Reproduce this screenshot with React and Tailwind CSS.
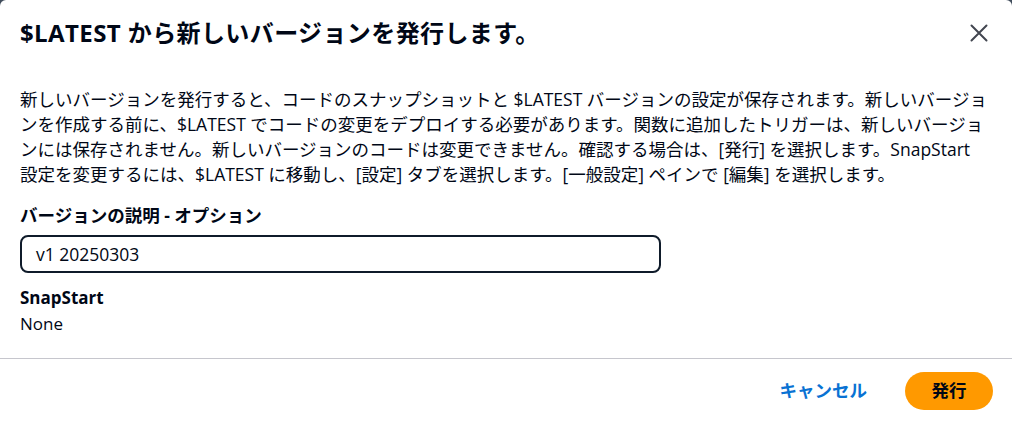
import React from 'react';

const font = { fontFamily: '"Open Sans", "Noto Sans CJK JP", sans-serif' };

const CloseIcon = () => (
  <svg width="20" height="20" viewBox="0 0 16 16" fill="none" stroke="#424650" strokeWidth="1.6" strokeLinecap="round">
    <path d="M2 2l12 12M14 2L2 14" />
  </svg>
);

export default function App() {
  return (
    <div className="w-[1012px] h-[422px] bg-[#414d5c] overflow-hidden text-[#000716]" style={font}>
      <div className="h-full bg-white rounded-t-[6px] flex flex-col">
        {/* Header */}
        <div className="flex items-start justify-between pl-5 pr-5 pt-[17px]">
          <h1 className="text-[24px] font-bold leading-[32px] tracking-[0.4px]">$LATEST から新しいバージョンを発行します。</h1>
          <button className="mt-[6px] mr-[3px]">
            <CloseIcon />
          </button>
        </div>

        {/* Body */}
        <div className="pl-5 pr-[22px] pt-[38px] flex-1">
          <p className="text-[17.5px] leading-[25px] text-[#000716]">
            新しいバージョンを発行すると、コードのスナップショットと $LATEST バージョンの設定が保存されます。新しいバージョンを作成する前に、$LATEST でコードの変更をデプロイする必要があります。関数に追加したトリガーは、新しいバージョンには保存されません。新しいバージョンのコードは変更できません。確認する場合は、[発行] を選択します。SnapStart 設定を変更するには、$LATEST に移動し、[設定] タブを選択します。[一般設定] ペインで [編集] を選択します。
          </p>

          <div className="mt-[16px]">
            <label className="block text-[17.5px] font-bold leading-[25px]">バージョンの説明 - オプション</label>
            <div className="mt-[7px] w-[641px] h-[38px] border-2 border-[#0f1b2a] rounded-[8px] flex items-center px-[14px] text-[17.5px]">
              v1 20250303
            </div>
          </div>

          <div className="mt-[12px]">
            <div className="text-[17px] font-bold leading-[25px]">SnapStart</div>
            <div className="text-[17px] leading-[27px]">None</div>
          </div>
        </div>

        {/* Footer */}
        <div className="border-t border-[#c6c6cd] h-[64px] flex items-center justify-end gap-[38px] pr-[19px]">
          <button className="text-[17.5px] font-bold text-[#0972d3]">キャンセル</button>
          <button className="bg-[#ff9900] rounded-full w-[88px] h-[38px] text-[17.5px] font-bold text-[#000716]">発行</button>
        </div>
      </div>
    </div>
  );
}
